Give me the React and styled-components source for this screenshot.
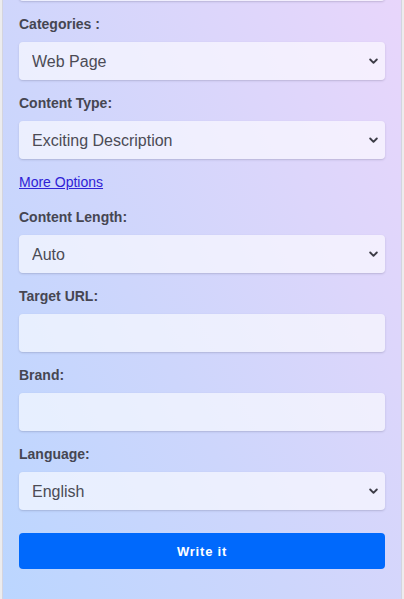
import React from 'react';
import styled, { createGlobalStyle } from 'styled-components';

const GlobalStyle = createGlobalStyle`
  html, body {
    margin: 0;
    padding: 0;
    background: #ececee;
    font-family: "Liberation Sans", Arial, sans-serif;
    overflow: hidden;
  }
  * { box-sizing: border-box; }
`;

const Viewport = styled.div`
  height: 599px;
  overflow: hidden;
  padding: 0 2px 0 2px;
`;

const Panel = styled.form`
  display: flex;
  flex-direction: column;
  margin-top: -37px;
  min-height: 660px;
  padding: 0 16px 0 16px;
  border-left: 1px solid #d4d4de;
  border-right: 1px solid #d4d4de;
  background: linear-gradient(62deg, #bad6ff 0%, #cdd6fc 40%, #dcd6fb 70%, #e9d6fb 100%);
`;

const Field = styled.div`
  display: flex;
  flex-direction: column;
  margin-bottom: ${(p) => (p.$last ? '23px' : '15px')};
`;

const Label = styled.label`
  font-size: 14px;
  line-height: 16px;
  font-weight: 700;
  color: #464652;
  margin: 0 0 10px 0;
`;

const SelectWrap = styled.div`
  position: relative;
  height: 38px;
`;

const Select = styled.select`
  appearance: none;
  -webkit-appearance: none;
  width: 100%;
  height: 38px;
  padding: 0 30px 0 13px;
  border: none;
  border-radius: 4px;
  background: rgba(255, 255, 255, 0.62);
  box-shadow: 0 1px 2px rgba(60, 60, 90, 0.22);
  font-family: "Liberation Sans", Arial, sans-serif;
  font-size: 16px;
  color: #4b4b55;
  outline: none;
`;

const Chevron = styled.svg`
  position: absolute;
  right: 7px;
  top: 16px;
  width: 9px;
  height: 7px;
  pointer-events: none;
`;

const TextInput = styled.input`
  width: 100%;
  height: 38px;
  padding: 0 13px;
  border: none;
  border-radius: 4px;
  background: rgba(255, 255, 255, 0.6);
  box-shadow: 0 1px 2px rgba(60, 60, 90, 0.22);
  font-family: "Liberation Sans", Arial, sans-serif;
  font-size: 16px;
  color: #4b4b55;
  outline: none;
`;

const MoreLink = styled.a`
  align-self: flex-start;
  font-size: 14px;
  line-height: 16px;
  color: #2f22d6;
  text-decoration: underline;
  margin: 0 0 19px 0;
`;

const Submit = styled.button`
  width: 100%;
  height: 36px;
  border: none;
  border-radius: 4px;
  background: #0069fc;
  color: #fff;
  font-family: "Liberation Sans", Arial, sans-serif;
  font-size: 13px;
  font-weight: 700;
  letter-spacing: 0.8px;
  cursor: pointer;
`;

const Dropdown = ({ value }) => (
  <SelectWrap>
    <Select defaultValue={value}>
      <option>{value}</option>
    </Select>
    <Chevron viewBox="0 0 9 7">
      <path d="M1.2 1.5 L4.5 4.8 L7.8 1.5" fill="none" stroke="#3c3c46" strokeWidth="1.9" strokeLinecap="round" strokeLinejoin="round" />
    </Chevron>
  </SelectWrap>
);

const App = () => {
  return (
    <Viewport>
      <GlobalStyle />
      <Panel onSubmit={(e) => e.preventDefault()}>
        <Field>
          <TextInput type="text" />
        </Field>
        <Field>
          <Label>Categories :</Label>
          <Dropdown value="Web Page" />
        </Field>
        <Field>
          <Label>Content Type:</Label>
          <Dropdown value="Exciting Description" />
        </Field>
        <MoreLink href="#">More Options</MoreLink>
        <Field>
          <Label>Content Length:</Label>
          <Dropdown value="Auto" />
        </Field>
        <Field>
          <Label>Target URL:</Label>
          <TextInput type="text" />
        </Field>
        <Field>
          <Label>Brand:</Label>
          <TextInput type="text" />
        </Field>
        <Field $last>
          <Label>Language:</Label>
          <Dropdown value="English" />
        </Field>
        <Submit type="submit">Write it</Submit>
      </Panel>
    </Viewport>
  );
};

export default App;
